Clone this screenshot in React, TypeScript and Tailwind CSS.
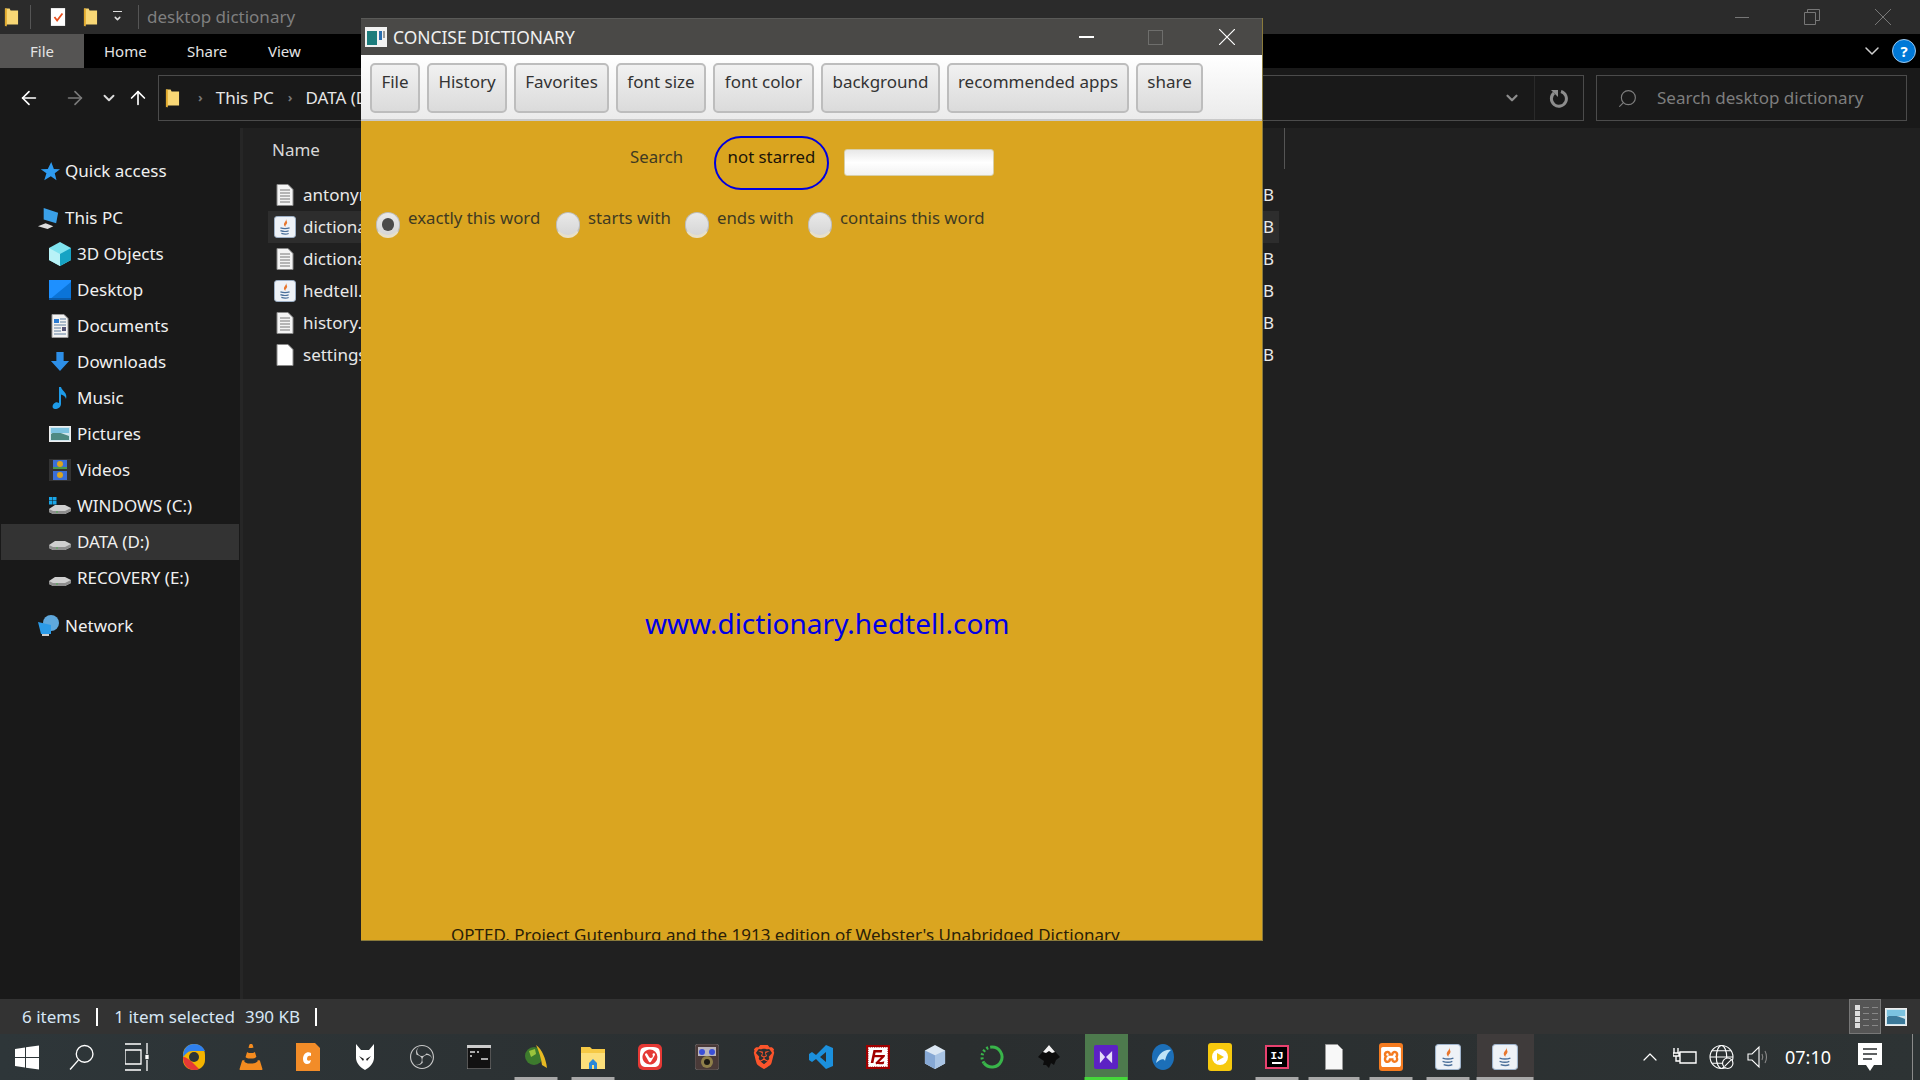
import React from "react";
import { SiBrave, SiFilezilla, SiObsstudio, SiVivaldi, SiVlcmediaplayer, SiXampp } from "react-icons/si";
import { ChevronDown, ChevronUp, Search, ArrowLeft, ArrowRight, ArrowUp } from "lucide-react";

const Folder = ({ className = "" }: { className?: string }) => (
  <svg viewBox="0 0 16 20" className={className}>
    <path d="M1 1h5l1 2h8v15H3l-2 2z" fill="#f8d775" />
    <path d="M1 1h2v19l-2-1z" fill="#e0a92e" />
  </svg>
);

const TextFile = () => (
  <svg viewBox="0 0 18 22" className="w-[18px] h-[22px] shrink-0">
    <path d="M1 .5h11l5 5v16H1z" fill="#f4f4f4" stroke="#8a8a8a" />
    <path d="M4 6h10M4 9h10M4 12h10M4 15h10M4 18h10" stroke="#777" strokeWidth="1" />
  </svg>
);

const BlankFile = () => (
  <svg viewBox="0 0 18 22" className="w-[18px] h-[22px] shrink-0">
    <path d="M1 .5h11l5 5v16H1z" fill="#fff" stroke="#8a8a8a" />
  </svg>
);

const JavaIcon = ({ size = 22 }: { size?: number }) => (
  <svg viewBox="0 0 24 24" width={size} height={size} className="shrink-0">
    <rect x="0.5" y="0.5" width="23" height="23" rx="3" fill="#eef2f7" stroke="#9fb4cc" />
    <path d="M13 3c1 3-3 4-2 7 .3 1 1 1.500 1.500 2-1-2 3-3.500 1.500-6z" fill="#e8762d" />
    <path d="M7 13c3 1 7 1 10 0M7 16c3 1 7 1 9 0M8 19c3 1 6 1 8 0" stroke="#4a6f9a" strokeWidth="1.300" fill="none" />
  </svg>
);

const DriveIcon = ({ windows = false }: { windows?: boolean }) => (
  <svg viewBox="0 0 22 18" className="w-[22px] h-[18px]">
    {windows && (
      <g fill="#19a6e8">
        <rect x="0" y="0" width="3.500" height="3.500" />
        <rect x="4" y="0" width="3.500" height="3.500" />
        <rect x="0" y="4" width="3.500" height="3.500" />
        <rect x="4" y="4" width="3.500" height="3.500" />
      </g>
    )}
    <path d="M0 12l6-4h10l6 3v3l-6 3H4l-4-2z" fill="#cfcfcf" />
    <path d="M0 12l4 2h12l6-3v3l-6 3H4l-4-2z" fill="#8e8e8e" />
    <rect x="7" y="14.500" width="2" height="1" fill="#4caf50" />
  </svg>
);

const sideRows: { label: string; icon: React.ReactNode }[] = [
  {
    label: "3D Objects",
    icon: (
      <svg viewBox="0 0 22 24" className="w-[22px] h-[24px]">
        <path d="M11 0l11 6v12l-11 6-11-6V6z" fill="#7fe3ef" />
        <path d="M11 12l11-6v12l-11 6z" fill="#16a3c4" />
        <path d="M11 12L0 6v12l11 6z" fill="#b8f2f7" />
      </svg>
    ),
  },
  {
    label: "Desktop",
    icon: (
      <svg viewBox="0 0 22 20" className="w-[22px] h-[20px]">
        <rect width="22" height="20" fill="#1e90ff" />
        <path d="M0 20L22 2v18z" fill="#0b74d8" />
        <rect y="18" width="22" height="2" fill="#0a5aa8" />
      </svg>
    ),
  },
  {
    label: "Documents",
    icon: (
      <svg viewBox="0 0 18 24" className="w-[18px] h-[24px]">
        <path d="M1 .5h12l4 4v19H1z" fill="#f3f3f3" stroke="#999" />
        <path d="M3 5h5v4H3z" fill="#2b7cd3" />
        <path d="M9 5h6M9 8h6M3 11h12M3 14h7M3 17h7M3 20h12" stroke="#5f7f9f" />
        <rect x="11" y="13" width="4" height="4" fill="#557" />
      </svg>
    ),
  },
  {
    label: "Downloads",
    icon: (
      <svg viewBox="0 0 22 22" className="w-[20px] h-[20px]">
        <path d="M7 0h8v10h6L11 21 1 10h6z" fill="#2d8fe8" />
      </svg>
    ),
  },
  {
    label: "Music",
    icon: (
      <svg viewBox="0 0 18 24" className="w-[18px] h-[24px]">
        <path d="M8 1h2c1 4 7 6 5 12-.5-2-2-4-5-4.500V18c0 3-3 5-6 5s-3-4-1-5.500 3-1.500 5-.5z" fill="#1e9be8" />
      </svg>
    ),
  },
  {
    label: "Pictures",
    icon: (
      <svg viewBox="0 0 22 16" className="w-[22px] h-[16px]">
        <rect x=".5" y=".5" width="21" height="15" fill="#cfe6ee" stroke="#eee" />
        <path d="M2 8c4-3 8-2 18 2v4H2z" fill="#4e8a82" />
        <rect x="2" y="2" width="18" height="5" fill="#7cc3e0" />
      </svg>
    ),
  },
  {
    label: "Videos",
    icon: (
      <svg viewBox="0 0 22 22" className="w-[22px] h-[22px]">
        <rect width="22" height="22" fill="#333" />
        <rect x="4" y="1" width="14" height="9" fill="#3a6fd8" />
        <rect x="4" y="12" width="14" height="9" fill="#3a6fd8" />
        <circle cx="11" cy="5" r="3" fill="#d9a520" />
        <circle cx="11" cy="16" r="3" fill="#d9a520" />
        <rect x="4" y="8" width="14" height="2" fill="#4a9a4a" />
      </svg>
    ),
  },
  { label: "WINDOWS (C:)", icon: <DriveIcon windows /> },
  { label: "DATA (D:)", icon: <DriveIcon /> },
  { label: "RECOVERY (E:)", icon: <DriveIcon /> },
];

const files: { name: string; icon: React.ReactNode }[] = [
  { name: "antonyms.txt", icon: <TextFile /> },
  { name: "dictionary.jar", icon: <JavaIcon /> },
  { name: "dictionary.txt", icon: <TextFile /> },
  { name: "hedtell.jar", icon: <JavaIcon /> },
  { name: "history.txt", icon: <TextFile /> },
  { name: "settings", icon: <BlankFile /> },
];

const menuButtons = [
  { label: "File", w: "w-[50px]" },
  { label: "History", w: "w-[80px]" },
  { label: "Favorites", w: "w-[95px]" },
  { label: "font size", w: "w-[90px]" },
  { label: "font color", w: "w-[101px]" },
  { label: "background", w: "w-[119px]" },
  { label: "recommended apps", w: "w-[182px]" },
  { label: "share", w: "w-[67px]" },
];

const radios = [
  { label: "exactly this word", checked: true, w: "w-[180px]" },
  { label: "starts with", w: "w-[129px]" },
  { label: "ends with", w: "w-[123px]" },
  { label: "contains this word", w: "w-[190px]" },
];

const Radio = ({ checked }: { checked?: boolean }) => (
  <span className="w-[24px] h-[26px] rounded-full bg-gradient-to-b from-[#e9e9e9] to-[#d6d6d6] border border-[#bdbdbd] border-b-[3px] border-b-[#e8e0c8] flex items-center justify-center shrink-0">
    {checked && <span className="w-[12px] h-[13px] rounded-full bg-[#4a4a4a]" />}
  </span>
);

const taskIcons: { node: React.ReactNode; bar?: string; bg?: string; narrow?: boolean }[] = [
  {
    node: (
      <svg viewBox="0 0 24 28" className="w-[24px] h-[28px]">
        <path d="M12 1c6 0 11 4 11 11v5c0 6-5 10-11 10S1 23 1 17v-5C1 5 6 1 12 1z" fill="#f4b400" />
        <path d="M1 14C1 5 6 1 12 1c6 0 9 3 11 7H10c-4 0-6 3-9 6z" fill="#2f80ed" />
        <path d="M1 14c0 8 5 13 11 13 2 0 3 0 5-1L9 18c-3-2-5-4-8-4z" fill="#e53935" />
        <circle cx="12" cy="14" r="5" fill="#2d3436" />
      </svg>
    ),
  },
  { node: <SiVlcmediaplayer size={26} color="#f48b1f" /> },
  {
    node: (
      <svg viewBox="0 0 24 28" className="w-[24px] h-[28px]">
        <path d="M0 0h19l5 5v23H0z" fill="#f28c28" />
        <path d="M15 10c-4-2-8 1-8 6s4 6 7 4l1-3c-2 1-4 1-4-1 0-3 2-4 4-3z" fill="#fff" />
      </svg>
    ),
  },
  {
    node: (
      <svg viewBox="0 0 20 28" className="w-[20px] h-[28px]">
        <path d="M1 1l5 6h8l5-6v14c0 5-5 10-9 12-4-2-9-7-9-12z" fill="#fff" />
        <path d="M4 13l5 3-1 2zM16 13l-5 3 1 2z" fill="#222" />
      </svg>
    ),
  },
  { node: <SiObsstudio size={24} color="#c8c8c8" /> },
  {
    node: (
      <svg viewBox="0 0 24 24" className="w-[24px] h-[24px]">
        <rect width="24" height="24" fill="#111" stroke="#999" />
        <rect width="24" height="3" fill="#ccc" />
        <path d="M3 7h5M10 7h2M3 11h2M14 14h7" stroke="#ddd" strokeWidth="1.500" />
      </svg>
    ),
  },
  {
    node: (
      <svg viewBox="0 0 24 26" className="w-[24px] h-[26px]">
        <circle cx="10" cy="12" r="9" fill="#3d7a2d" />
        <path d="M12 1c6 4 10 14 11 23l-5-3C17 14 15 7 12 1z" fill="#e8b923" />
        <path d="M5 7l6-2 1 5-5 3z" fill="#9ac43c" />
      </svg>
    ),
    bar: "w-[43px] bg-[#a8a8a8]",
  },
  {
    node: (
      <svg viewBox="0 0 24 24" className="w-[24px] h-[24px]">
        <path d="M0 2h9l2 2h13v20H0z" fill="#f6c945" />
        <path d="M0 8h24v16H0z" fill="#fcdf7b" />
        <path d="M8 18l4-4 4 4v6h-3v-4h-2v4H8z" fill="#2b88d8" />
      </svg>
    ),
    bar: "w-[43px] bg-[#a8a8a8]",
  },
  { node: <span className="w-[24px] h-[26px] rounded-[5px] bg-[#e53935] flex items-center justify-center"><SiVivaldi size={20} color="#fff" /></span> },
  {
    node: (
      <svg viewBox="0 0 24 26" className="w-[24px] h-[26px]">
        <rect width="24" height="26" rx="3" fill="#4a3a38" stroke="#777" strokeWidth=".6" />
        <path d="M3 3h18v9H3z" fill="#b9b4bc" />
        <circle cx="7" cy="8" r="3" fill="#3b4fd8" />
        <circle cx="17" cy="8" r="3" fill="#3b4fd8" />
        <circle cx="12" cy="18" r="6" fill="#8f7f4a" />
        <circle cx="12" cy="18" r="3" fill="#1c1a14" />
      </svg>
    ),
  },
  { node: <SiBrave size={24} color="#fb542b" /> },
  {
    node: (
      <svg viewBox="0 0 24 24" className="w-[24px] h-[24px]">
        <path d="M17 0l7 3v18l-7 3L7 14l-4 3-3-2V9l3-2 4 3zM17 7l-6 5 6 5z" fill="#1b90dd" />
      </svg>
    ),
  },
  { node: <span className="w-[24px] h-[24px] bg-[#a00000] flex items-center justify-center"><SiFilezilla size={20} color="#fff" /></span> },
  {
    node: (
      <svg viewBox="0 0 24 26" className="w-[22px] h-[26px]">
        <path d="M12 0l11 6v14l-11 6-11-6V6z" fill="#dbe7f3" />
        <path d="M12 11l11-5v14l-11 6z" fill="#a9c4e4" />
        <path d="M12 11L1 6v14l11 6z" fill="#86a8d4" />
      </svg>
    ),
  },
  {
    node: (
      <svg viewBox="0 0 24 26" className="w-[24px] h-[26px]" fill="none">
        <path d="M12 3A10 10 0 1 1 4 19" stroke="#39b54a" strokeWidth="3" />
        <path d="M4 19A10 10 0 0 1 12 3" stroke="#39b54a" strokeWidth="3" strokeDasharray="2 2" />
      </svg>
    ),
  },
  {
    node: (
      <svg viewBox="0 0 24 26" className="w-[24px] h-[26px]">
        <path d="M12 1l11 12-4 3-2 5-3-2-2 5-3-3-3 0 1-4-6-4z" fill="#0c0c0c" />
        <path d="M12 1l6 7-3 1-3-2-3 2-3-1z" fill="#f4f4f4" />
      </svg>
    ),
  },
  {
    node: (
      <span className="w-[24px] h-[24px] rounded-[2px] bg-[#5c21c4] flex items-center justify-center">
        <svg viewBox="0 0 16 16" className="w-[14px] h-[14px]">
          <path d="M1 1l6 7-6 7zM15 1v14L8 8z" fill="#e4dcf8" />
        </svg>
      </span>
    ),
    bg: "bg-[#4d7a4d]",
    bar: "w-full bg-[#45d83a]",
    narrow: true,
  },
  {
    node: (
      <svg viewBox="0 0 24 28" className="w-[24px] h-[28px]">
        <ellipse cx="12" cy="14" rx="11" ry="13" fill="#1c6fb8" />
        <path d="M5 20c2-9 8-14 15-13-4 3-5 7-6 11-1-3-5-2-9 2z" fill="#bfe3f7" />
      </svg>
    ),
  },
  {
    node: (
      <span className="w-[24px] h-[28px] rounded-[3px] bg-[#f6c90e] flex items-center justify-center">
        <span className="w-[16px] h-[16px] rounded-full bg-white flex items-center justify-center">
          <svg viewBox="0 0 8 8" className="w-[8px] h-[8px]">
            <path d="M1 0l7 4-7 4z" fill="#f6c90e" />
          </svg>
        </span>
      </span>
    ),
  },
  {
    node: (
      <span className="w-[24px] h-[24px] bg-black border-2 border-[#e8416f] flex flex-col items-center justify-center text-[11px] leading-[12px] text-white font-bold font-['Liberation_Mono',monospace]">
        IJ
        <span className="w-[10px] h-[2px] bg-white" />
      </span>
    ),
    bar: "w-[43px] bg-[#a8a8a8]",
  },
  {
    node: (
      <svg viewBox="0 0 18 26" className="w-[18px] h-[26px]">
        <path d="M.5.5h12l5 5v20H.5z" fill="#f8f8f8" stroke="#999" />
      </svg>
    ),
    bar: "w-[51px] bg-[#a8a8a8]",
  },
  { node: <span className="w-[24px] h-[28px] rounded-[3px] bg-[#f47b20] flex items-center justify-center"><SiXampp size={20} color="#fff" /></span>, bar: "w-[43px] bg-[#a8a8a8]" },
  { node: <JavaIcon size={26} />, bar: "w-[43px] bg-[#a8a8a8]" },
  { node: <JavaIcon size={26} />, bg: "bg-[#3f3b3b]", bar: "w-full bg-[#a8a8a8]" },
];

const ExplorerTitleBar = () => (
  <div className="h-[34px] bg-[#2b2b2b] flex items-center text-[#7f7f7f] shrink-0">
    <Folder className="w-[15px] h-[20px] ml-[4px]" />
    <span className="w-px h-[24px] bg-[#555] ml-[11px]" />
    <svg viewBox="0 0 18 22" className="w-[16px] h-[20px] ml-[19px]">
      <path d="M1 1h16v20H1z" fill="#fff" />
      <path d="M5 11l3 4 6-8" stroke="#e8501f" strokeWidth="2" fill="none" />
    </svg>
    <Folder className="w-[15px] h-[20px] ml-[17px]" />
    <span className="ml-[15px] w-[9px] text-[#ddd] flex flex-col items-center gap-[2px]">
      <span className="w-[9px] h-px bg-[#ddd]" />
      <ChevronDown size={9} strokeWidth={4} />
    </span>
    <span className="w-px h-[24px] bg-[#555] ml-[16px]" />
    <span className="ml-[8px] text-[17px]">desktop dictionary</span>
    <span className="ml-auto w-[14px] h-px bg-[#777] mr-[55px]" />
    <svg viewBox="0 0 16 16" className="w-[16px] h-[16px] mr-[55px]" fill="none" stroke="#777">
      <path d="M.5 3.500h11v12H.5zM3.500 3V.5h12v11h-3.500" />
    </svg>
    <svg viewBox="0 0 16 16" className="w-[16px] h-[16px] mr-[29px]" stroke="#777">
      <path d="M0 0l16 16M16 0L0 16" />
    </svg>
  </div>
);

const Ribbon = () => (
  <div className="h-[34px] bg-black flex items-center text-[15px] text-[#e4e4e4] shrink-0">
    <span className="w-[84px] h-full bg-[#555453] flex items-center justify-center">File</span>
    <span className="ml-[20px] w-[42px]">Home</span>
    <span className="ml-[41px] w-[40px]">Share</span>
    <span className="ml-[41px] w-[34px]">View</span>
    <ChevronDown size={24} strokeWidth={1.500} className="ml-auto mr-[8px] text-[#cfcfcf]" />
    <span className="w-[24px] h-[24px] mr-[4px] rounded-full bg-[#0078d7] border border-[#9cc8ee] flex items-center justify-center text-white text-[15px] font-bold">?</span>
  </div>
);

const NavBar = () => (
  <div className="h-[60px] bg-[#191919] flex items-center shrink-0">
    <ArrowLeft size={22} strokeWidth={1.800} className="ml-[18px] text-white" />
    <ArrowRight size={22} strokeWidth={1.800} className="ml-[24px] text-[#7a7a7a]" />
    <ChevronDown size={18} strokeWidth={2.500} className="ml-[14px] text-[#dcdcdc]" />
    <ArrowUp size={22} strokeWidth={1.800} className="ml-[9px] text-white" />
    <div className="ml-[9px] w-[1426px] h-[46px] border border-[#4b4b4b] flex items-center text-[17px] text-[#e6e6e6]">
      <Folder className="w-[15px] h-[24px] ml-[6px]" />
      <span className="ml-[18px] text-[#777] text-[13px] font-bold">›</span>
      <span className="ml-[13px]">This PC</span>
      <span className="ml-[14px] text-[#777] text-[13px] font-bold">›</span>
      <span className="ml-[13px]">DATA (D:)</span>
      <ChevronDown size={18} strokeWidth={3} className="ml-auto mr-[13px] text-[#8d8d8d]" />
      <span className="w-px h-full bg-[#2a2a2a]" />
      <svg viewBox="0 0 20 20" className="ml-[14px] mr-[14px] w-[20px] h-[20px]" fill="none" stroke="#8d8d8d" strokeWidth="3">
        <path d="M12 3.500A7.500 7.500 0 1 1 5 5" />
        <path d="M2 2h7v7z" fill="#8d8d8d" stroke="none" />
      </svg>
    </div>
    <div className="ml-[12px] w-[311px] h-[46px] border border-[#4b4b4b] flex items-center text-[17px] text-[#7e7e7e]">
      <Search size={21} strokeWidth={1.300} className="ml-[20px] -scale-x-100" />
      <span className="ml-[19px]">Search desktop dictionary</span>
    </div>
  </div>
);

const Sidebar = () => (
  <div className="w-[243px] shrink-0 bg-[#191919] border-r-[3px] border-r-[#262626] pt-[25px] text-[17px] text-[#f0f0f0]">
    <div className="h-[36px] flex items-center pl-[39px] gap-[5px]">
      <svg viewBox="0 0 24 24" className="w-[21px] h-[21px]">
        <path d="M14 1l3 8 7 .5-6 4.500 2 8-6.500-4.500L6 22l2.500-8L2 9.500 10 9z" fill="#2e9bf0" />
      </svg>
      Quick access
    </div>
    <div className="mt-[11px] h-[36px] flex items-center pl-[37px] gap-[5px]">
      <svg viewBox="0 0 24 24" className="w-[23px] h-[23px]">
        <path d="M7 1l15 5-2 11-13-4z" fill="#3aa0e8" />
        <path d="M1 20l8-3 8 3-6 3z" fill="#ddd" />
      </svg>
      This PC
    </div>
    {sideRows.map((row) => (
      <div
        key={row.label}
        className={`h-[36px] flex items-center pl-[49px] ${row.label === "DATA (D:)" ? "bg-[#333333] mx-[1px] !pl-[48px]" : ""}`}
      >
        <span className="w-[22px] flex justify-center shrink-0">{row.icon}</span>
        <span className="ml-[6px]">{row.label}</span>
      </div>
    ))}
    <div className="mt-[12px] h-[36px] flex items-center pl-[38px] gap-[5px]">
      <svg viewBox="0 0 22 22" className="w-[22px] h-[22px]">
        <circle cx="13" cy="8" r="8" fill="#5fa8dc" />
        <path d="M0 7l13 3v9H3z" fill="#2b9be8" />
        <rect x="4" y="19" width="7" height="2" fill="#ccc" />
      </svg>
      Network
    </div>
  </div>
);

const FileList = () => (
  <div className="flex-1 bg-[#202020] text-[#e8e8e8] text-[17px] pl-[25px] relative">
    <div className="h-[41px] flex items-center text-[17px] pl-[4px] pt-[2px] text-[#d8d8d8] mr-[6px] border-r border-r-[#555] w-[1017px]">Name</div>
    <div className="pt-[10px]">
      {files.map((file, i) => (
        <div key={file.name} className={`h-[32px] w-[1011px] flex items-center ${i === 1 ? "bg-[#2d2d2d]" : ""}`}>
          <span className="w-[24px] ml-[5px] flex justify-center shrink-0">{file.icon}</span>
          <span className="ml-[6px]">{file.name}</span>
          <span className="ml-auto mr-[5px]">KB</span>
        </div>
      ))}
    </div>
  </div>
);

const StatusBar = () => (
  <div className="h-[35px] bg-[#333333] flex items-center text-[17px] text-[#d6e6f5] shrink-0">
    <span className="ml-[22px]">6 items</span>
    <span className="ml-[16px] w-[2px] h-[18px] bg-white" />
    <span className="ml-[16px]">1 item selected</span>
    <span className="ml-[10px]">390 KB</span>
    <span className="ml-[15px] w-[2px] h-[18px] bg-white" />
    <span className="ml-auto w-[32px] h-full bg-[#555] border border-[#777] flex flex-col justify-center gap-[1px] pl-[5px]">
      {[0, 1, 2, 3].map((n) => (
        <span key={n} className="flex items-center gap-[3px]">
          <span className="w-[5px] h-[5px] bg-[#ddd]" />
          <span className="w-[6px] h-px bg-[#888]" />
          <span className="w-[6px] h-px bg-[#888]" />
        </span>
      ))}
    </span>
    <svg viewBox="0 0 22 18" className="ml-[4px] mr-[13px] w-[22px] h-[18px]">
      <rect x=".5" y=".5" width="21" height="17" fill="#cfe6ee" stroke="#eee" />
      <path d="M2 9c4-3 8-2 18 2v5H2z" fill="#3c7a9a" />
      <rect x="2" y="2" width="18" height="6" fill="#7cc3e0" />
    </svg>
  </div>
);

const Taskbar = () => (
  <div className="h-[46px] bg-gradient-to-r from-[#2e3639] via-[#2a2e2f] to-[#2d3334] flex items-stretch shrink-0 text-white">
    <div className="w-[54px] flex items-center justify-center">
      <svg viewBox="0 0 24 24" className="w-[24px] h-[29px]">
        <path d="M0 3.500l10-1.500v9.500H0zM11 1.800L24 0v11.500H11zM0 12.500h10V22L0 20.500zM11 12.500h13V24l-13-1.800z" fill="#fff" />
      </svg>
    </div>
    <div className="w-[54px] flex items-center justify-center">
      <svg viewBox="0 0 24 24" className="w-[25px] h-[30px]" fill="none" stroke="#fff" strokeWidth="1.300">
        <circle cx="15" cy="9" r="8" />
        <path d="M9 15L1 24" />
      </svg>
    </div>
    <div className="w-[57.500px] flex items-center justify-center">
      <svg viewBox="0 0 24 28" className="w-[24px] h-[28px]" fill="none" stroke="#fff" strokeWidth="1.300">
        <path d="M0 1h16M0 27h16M0 7h16v14H0zM22 0v11M22 17v11" />
        <rect x="21" y="12.500" width="2" height="3" fill="#fff" />
      </svg>
    </div>
    {taskIcons.map((item, i) => (
      <div key={i} className={`relative flex items-center justify-center ${item.narrow ? "w-[43px] mx-[7px]" : "w-[57px]"} ${item.bg ?? ""}`}>
        {item.node}
        {item.bar && <span className={`absolute bottom-0 h-[3px] left-1/2 -translate-x-1/2 ${item.bar}`} />}
      </div>
    ))}
    <div className="ml-auto flex items-center text-white">
      <ChevronUp size={24} strokeWidth={1.200} />
      <svg viewBox="0 0 24 18" className="ml-[11px] w-[24px] h-[18px]" fill="none" stroke="#fff" strokeWidth="1.400">
        <path d="M7 4h16v11H7zM1 0v5M5 0v5M0 5h6v3H0zM3 8v5h4" />
      </svg>
      <svg viewBox="0 0 24 24" className="ml-[12px] w-[25px] h-[30px]" fill="none" stroke="#fff" strokeWidth="1.100">
        <circle cx="12" cy="12" r="11" />
        <ellipse cx="12" cy="12" rx="5" ry="11" />
        <path d="M1 12h22M3 6h18M3 18h18" />
        <circle cx="18" cy="18" r="5" fill="#2a2e2f" />
        <path d="M15 21l6-6" />
      </svg>
      <svg viewBox="0 0 22 24" className="ml-[13px] w-[22px] h-[24px]" fill="none" stroke="#fff" strokeWidth="1.100">
        <path d="M1 9h4l7-7v20l-7-7H1z" />
        <path d="M15 9c1 2 1 4 0 6M18 6c2 4 2 8 0 12" stroke="#888" />
      </svg>
      <span className="ml-[16px] text-[18px]">07:10</span>
      <svg viewBox="0 0 24 28" className="ml-[27px] w-[24px] h-[28px]">
        <path d="M0 0h24v22h-8l-4 6-4-6H0z" fill="#fff" />
        <path d="M5 6h14M5 11h14M5 16h9" stroke="#2a2e2f" strokeWidth="1.300" />
      </svg>
      <span className="ml-[30px] mr-[7px] w-[1px] h-[46px] bg-[#8a8a8a]" />
    </div>
  </div>
);

const DictionaryWindow = () => (
  <div className="absolute left-[361px] top-[18px] w-[902px] h-[923px] overflow-hidden flex flex-col bg-[#daa520] border-r border-b border-[#8a7a3a]">
    <div className="h-[37px] bg-[#4a4947] flex items-center text-[#f0f0f0] text-[17.400px] shrink-0 border-t border-[#5a5a58]">
      <svg viewBox="0 0 22 20" className="ml-[4px] w-[22px] h-[20px]">
        <rect width="22" height="20" fill="#f2f2f2" />
        <rect x="2" y="4" width="10" height="14" fill="#1c7c7c" />
        <rect x="14" y="4" width="3" height="9" fill="#2a6fb0" />
        <rect x="18" y="4" width="2" height="7" fill="#999" />
      </svg>
      <span className="ml-[6px]">CONCISE DICTIONARY</span>
      <span className="ml-auto w-[15px] h-[2px] bg-white mr-[54px]" />
      <span className="w-[15px] h-[15px] border border-[#6e6e6c] mr-[56px]" />
      <svg viewBox="0 0 16 16" className="w-[16px] h-[16px] mr-[27px]" stroke="#fff" strokeWidth="1.200">
        <path d="M0 0l16 16M16 0L0 16" />
      </svg>
    </div>
    <div className="h-[66px] bg-gradient-to-b from-white to-[#ebebeb] border-b-2 border-[#c9c9c9] pl-[9px] pt-[8px] flex gap-[7px] shrink-0 text-[17px] text-[#333]">
      {menuButtons.map((btn) => (
        <div
          key={btn.label}
          className={`${btn.w} h-[50px] rounded-[5px] border-2 border-[#bdbdbd] bg-gradient-to-b from-[#f1f1f1] to-[#dbdbdb] flex justify-center pt-[3px] leading-[28px]`}
        >
          {btn.label}
        </div>
      ))}
    </div>
    <div className="mt-[15px] ml-[269px] flex items-start shrink-0 text-[16.800px]">
      <span className="mt-[8px] leading-[26px] text-[#3f3a22] w-[84px]">Search</span>
      <div className="w-[115px] h-[54px] rounded-[27px] border-2 border-[#0000e0] flex justify-center pt-[6px] leading-[26px] text-[#1a1408]">
        not starred
      </div>
      <div className="ml-[15px] mt-[13px] w-[150px] h-[27px] rounded-[3px] border border-[#d8cfa8] bg-gradient-to-b from-[#e8e8e8] via-white to-[#f2f2f2]" />
    </div>
    <div className="mt-[22px] ml-[15px] flex shrink-0 text-[16.800px] text-[#3f3a22]">
      {radios.map((r) => (
        <div key={r.label} className={`${r.w} flex items-start gap-[8px] leading-[26px]`}>
          <Radio checked={r.checked} />
          <span className="-mt-[7px] whitespace-nowrap">{r.label}</span>
        </div>
      ))}
    </div>
    <div className="mt-[367px] ml-[284px] text-[28px] leading-[36px] text-[#0000e6] shrink-0">www.dictionary.hedtell.com</div>
    <div className="mt-[283px] ml-[90px] text-[17px] leading-[22px] text-[#2a2008] whitespace-nowrap shrink-0">
      OPTED, Project Gutenburg and the 1913 edition of Webster's Unabridged Dictionary
    </div>
  </div>
);

export default function App() {
  return (
    <div className="w-[1920px] h-[1080px] relative overflow-hidden flex flex-col bg-[#191919] font-['Noto_Sans',sans-serif]">
      <ExplorerTitleBar />
      <Ribbon />
      <NavBar />
      <div className="flex-1 flex min-h-0">
        <Sidebar />
        <FileList />
      </div>
      <StatusBar />
      <Taskbar />
      <DictionaryWindow />
    </div>
  );
}
